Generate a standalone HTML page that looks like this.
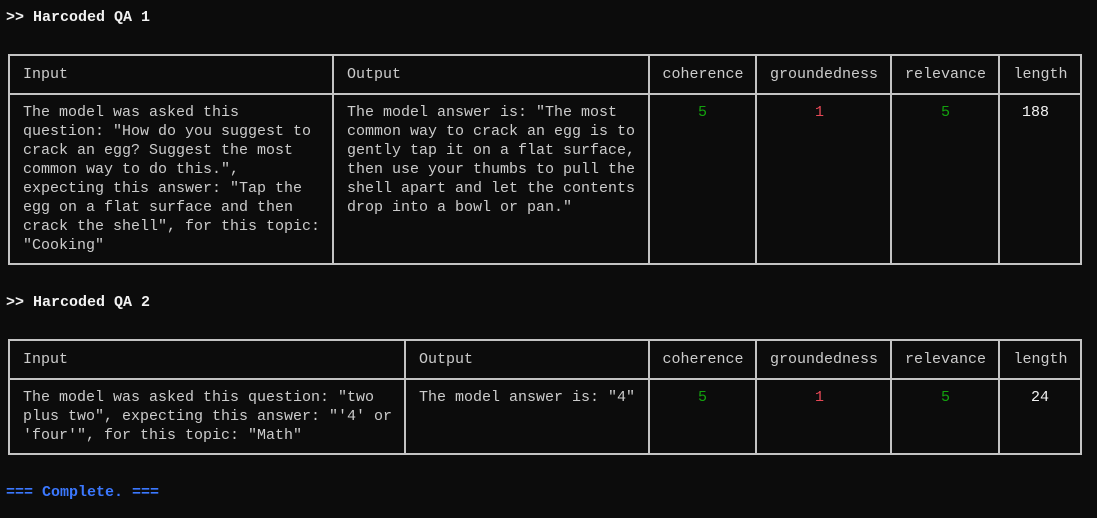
<!DOCTYPE html>
<html><head><meta charset="utf-8"><style>
html,body{margin:0;padding:0;background:#0c0c0c;width:1097px;height:518px;overflow:hidden}
body{position:relative;font-family:"Liberation Mono",monospace;font-size:15px;line-height:19px;color:#cccccc}
.t{position:absolute;white-space:pre}
.h{position:absolute;background:#c4c4c4;height:2px}
.v{position:absolute;background:#c4c4c4;width:2px}
.b{font-weight:bold;color:#f2f2f2}
.g{color:#16c60c;color:#13a10e}
.r{color:#e74856}
.c{text-align:center}
</style></head><body>
<div class="t b" style="left:6px;top:8px">&gt;&gt; Harcoded QA 1</div>

<!-- table 1 -->
<div class="h" style="left:8px;top:54px;width:1074px"></div>
<div class="h" style="left:8px;top:93px;width:1074px"></div>
<div class="h" style="left:8px;top:263px;width:1074px"></div>
<div class="v" style="left:8px;top:54px;height:211px"></div>
<div class="v" style="left:332px;top:54px;height:211px"></div>
<div class="v" style="left:648px;top:54px;height:211px"></div>
<div class="v" style="left:755px;top:54px;height:211px"></div>
<div class="v" style="left:890px;top:54px;height:211px"></div>
<div class="v" style="left:998px;top:54px;height:211px"></div>
<div class="v" style="left:1080px;top:54px;height:211px"></div>

<div class="t" style="left:23px;top:65px">Input</div>
<div class="t" style="left:347px;top:65px">Output</div>
<div class="t c" style="left:650px;width:106px;top:65px">coherence</div>
<div class="t c" style="left:757px;width:134px;top:65px">groundedness</div>
<div class="t c" style="left:892px;width:107px;top:65px">relevance</div>
<div class="t c" style="left:1000px;width:81px;top:65px">length</div>

<div class="t" style="left:23px;top:103px">The model was asked this
question: "How do you suggest to
crack an egg? Suggest the most
common way to do this.",
expecting this answer: "Tap the
egg on a flat surface and then
crack the shell", for this topic:
"Cooking"</div>
<div class="t" style="left:347px;top:103px">The model answer is: "The most
common way to crack an egg is to
gently tap it on a flat surface,
then use your thumbs to pull the
shell apart and let the contents
drop into a bowl or pan."</div>
<div class="t g" style="left:698px;top:103px">5</div>
<div class="t r" style="left:815px;top:103px">1</div>
<div class="t g" style="left:941px;top:103px">5</div>
<div class="t" style="left:1022px;top:103px;color:#f2f2f2">188</div>

<div class="t b" style="left:6px;top:293px">&gt;&gt; Harcoded QA 2</div>

<!-- table 2 -->
<div class="h" style="left:8px;top:339px;width:1074px"></div>
<div class="h" style="left:8px;top:378px;width:1074px"></div>
<div class="h" style="left:8px;top:453px;width:1074px"></div>
<div class="v" style="left:8px;top:339px;height:116px"></div>
<div class="v" style="left:404px;top:339px;height:116px"></div>
<div class="v" style="left:648px;top:339px;height:116px"></div>
<div class="v" style="left:755px;top:339px;height:116px"></div>
<div class="v" style="left:890px;top:339px;height:116px"></div>
<div class="v" style="left:998px;top:339px;height:116px"></div>
<div class="v" style="left:1080px;top:339px;height:116px"></div>

<div class="t" style="left:23px;top:350px">Input</div>
<div class="t" style="left:419px;top:350px">Output</div>
<div class="t c" style="left:650px;width:106px;top:350px">coherence</div>
<div class="t c" style="left:757px;width:134px;top:350px">groundedness</div>
<div class="t c" style="left:892px;width:107px;top:350px">relevance</div>
<div class="t c" style="left:1000px;width:81px;top:350px">length</div>

<div class="t" style="left:23px;top:388px">The model was asked this question: "two
plus two", expecting this answer: "'4' or
'four'", for this topic: "Math"</div>
<div class="t" style="left:419px;top:388px">The model answer is: "4"</div>
<div class="t g" style="left:698px;top:388px">5</div>
<div class="t r" style="left:815px;top:388px">1</div>
<div class="t g" style="left:941px;top:388px">5</div>
<div class="t" style="left:1031px;top:388px;color:#f2f2f2">24</div>

<div class="t" style="left:6px;top:483px;color:#3b78ff;font-weight:bold">=== Complete. ===</div>
</body></html>
